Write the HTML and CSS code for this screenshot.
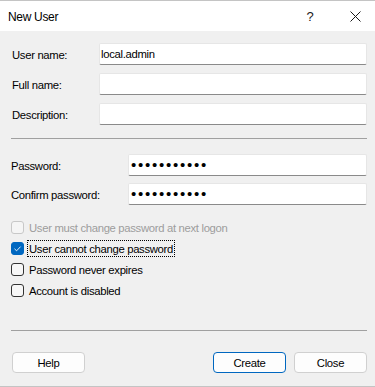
FILE: index.html
```html
<!DOCTYPE html>
<html>
<head>
<meta charset="utf-8">
<title>New User</title>
<link rel="stylesheet" href="styles.css">
</head>
<body>
<div class="window">
  <div class="titlebar">
    <span class="title">New User</span>
    <span class="help-btn">?</span>
    <span class="close-btn">
      <svg width="11" height="11" viewBox="0 0 11 11"><path d="M0.5 0.5 L10.5 10.5 M10.5 0.5 L0.5 10.5" stroke="#1a1a1a" stroke-width="1" fill="none"/></svg>
    </span>
  </div>
  <div class="content">
    <div class="group">
      <div class="field"><label class="label">User name:</label><div class="input">local.admin</div></div>
      <div class="field"><label class="label">Full name:</label><div class="input"></div></div>
      <div class="field"><label class="label">Description:</label><div class="input"></div></div>
    </div>
    <div class="sep sep-top"></div>
    <div class="group pw">
      <div class="field"><label class="label wide">Password:</label><div class="input dots">•••••••••••</div></div>
      <div class="field"><label class="label wide">Confirm password:</label><div class="input dots">•••••••••••</div></div>
    </div>
    <div class="checks">
      <div class="check disabled"><span class="box"></span><span class="ctext">User must change password at next logon</span></div>
      <div class="check"><span class="box checked"><svg width="13" height="13" viewBox="0 0 13 13"><path d="M3.5 6.8 L5.6 8.8 L9.6 4.6" stroke="#ffffff" stroke-width="0.9" fill="none"/></svg></span><span class="ctext focus">User cannot change password</span></div>
      <div class="check"><span class="box"></span><span class="ctext">Password never expires</span></div>
      <div class="check"><span class="box"></span><span class="ctext">Account is disabled</span></div>
    </div>
    <div class="sep sep-bottom"></div>
    <div class="buttons">
      <button class="btn">Help</button>
      <span class="spacer"></span>
      <button class="btn default">Create</button>
      <button class="btn">Close</button>
    </div>
  </div>
</div>
</body>
</html>
```
FILE: styles.css
```css
html, body {
  margin: 0;
  padding: 0;
}
body {
  width: 375px;
  height: 387px;
  background: #f0f0f0;
  font-family: "Liberation Sans", Arial, sans-serif;
  font-size: 11.3px;
  letter-spacing: -0.32px;
  color: #000;
  overflow: hidden;
}
.window {
  box-sizing: border-box;
  height: 387px;
  border-top: 1px solid #c4c4c4;
  border-bottom: 1px solid #c4c4c4;
  display: flex;
  flex-direction: column;
}
.titlebar {
  height: 30px;
  background: #ffffff;
  display: flex;
  align-items: center;
  padding-left: 8px;
}
.title {
  font-size: 12px;
  flex: 1;
  padding-top: 1px;
}
.help-btn {
  width: 46px;
  text-align: center;
  font-size: 13px;
  color: #1a1a1a;
  padding-left: 12px;
  padding-top: 1px;
}
.close-btn {
  width: 40px;
  display: flex;
  justify-content: center;
  align-items: center;
  padding-left: 2px;
}
.content {
  flex: 1;
  padding: 12px 8px 0 11px;
  display: flex;
  flex-direction: column;
}
.group {
  display: flex;
  flex-direction: column;
  gap: 8px;
}
.group.pw {
  gap: 7px;
  margin-top: 15px;
}
.field {
  display: flex;
  align-items: center;
  height: 22px;
}
.label {
  width: 87px;
  padding-left: 1px;
  padding-top: 2px;
}
.label.wide {
  width: 117px;
  padding-left: 0;
}
.input {
  flex: 1;
  box-sizing: border-box;
  height: 22px;
  background: #ffffff;
  border: 1px solid #e6e6e6;
  border-bottom: 1px solid #8a8a8a;
  border-radius: 2px;
  padding: 3px 0 0 1px;
  line-height: 14px;
}
.input.dots {
  font-size: 15px;
  letter-spacing: 1.75px;
  padding: 1px 0 0 2px;
  line-height: 18px;
}
.sep {
  border-top: 1px solid #a0a0a0;
}
.sep-top {
  margin-top: 13px;
}
.checks {
  margin-top: 12px;
  display: flex;
  flex-direction: column;
}
.check {
  height: 21px;
  display: flex;
  align-items: center;
}
.box {
  box-sizing: border-box;
  width: 13px;
  height: 13px;
  border: 1px solid #333333;
  border-radius: 3px;
  background: #f7f7f7;
  margin-right: 3px;
  display: flex;
}
.box.checked {
  background: #0067c0;
  border-color: #0067c0;
}
.box.checked svg {
  margin: -1px;
}
.disabled .box {
  border-color: #c8c8c8;
  background: #f5f5f5;
}
.disabled .ctext {
  color: #9d9d9d;
}
.ctext {
  padding: 1px 1px 0 1px;
  height: 14px;
  line-height: 14px;
  border: 1px solid transparent;
}
.ctext.focus {
  border: 1px dotted #000000;
}
.sep-bottom {
  margin-top: 29px;
}
.buttons {
  margin-top: 21px;
  display: flex;
  gap: 8px;
  padding-left: 1px;
}
.spacer {
  flex: 1;
}
.btn {
  box-sizing: border-box;
  width: 73px;
  height: 21px;
  background: #fdfdfd;
  border: 1px solid #d0d0d0;
  border-radius: 4px;
  font-family: "Liberation Sans", Arial, sans-serif;
  font-size: 11.3px;
  letter-spacing: -0.32px;
  color: #000;
  padding: 1px 0 0 0;
}
.btn.default {
  border-color: #0067c0;
}
```
